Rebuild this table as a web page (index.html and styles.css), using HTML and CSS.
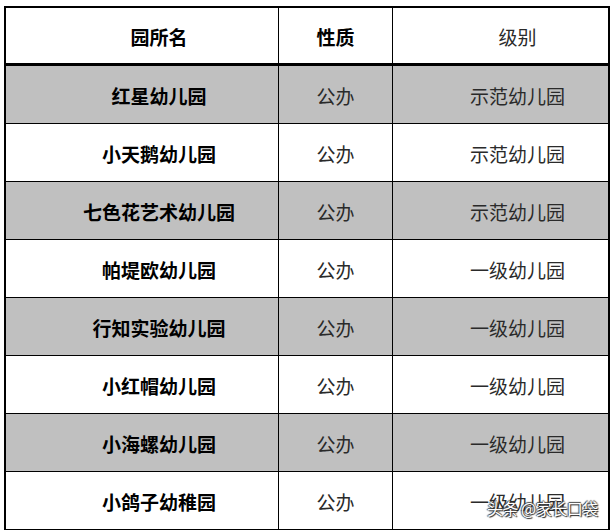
FILE: index.html
```html
<!DOCTYPE html>
<html lang="zh">
<head>
<meta charset="utf-8">
<link rel="stylesheet" href="styles.css">
</head>
<body>
<div class="page">
  <div class="table">
    <div class="row head">
      <div class="cell c1 b">园所名</div>
      <div class="cell c2 b">性质</div>
      <div class="cell c3">级别</div>
    </div>
    <div class="row gray first">
      <div class="cell c1 b">红星幼儿园</div>
      <div class="cell c2">公办</div>
      <div class="cell c3">示范幼儿园</div>
    </div>
    <div class="row">
      <div class="cell c1 b">小天鹅幼儿园</div>
      <div class="cell c2">公办</div>
      <div class="cell c3">示范幼儿园</div>
    </div>
    <div class="row gray">
      <div class="cell c1 b">七色花艺术幼儿园</div>
      <div class="cell c2">公办</div>
      <div class="cell c3">示范幼儿园</div>
    </div>
    <div class="row">
      <div class="cell c1 b">帕堤欧幼儿园</div>
      <div class="cell c2">公办</div>
      <div class="cell c3">一级幼儿园</div>
    </div>
    <div class="row gray">
      <div class="cell c1 b">行知实验幼儿园</div>
      <div class="cell c2">公办</div>
      <div class="cell c3">一级幼儿园</div>
    </div>
    <div class="row">
      <div class="cell c1 b">小红帽幼儿园</div>
      <div class="cell c2">公办</div>
      <div class="cell c3">一级幼儿园</div>
    </div>
    <div class="row gray">
      <div class="cell c1 b">小海螺幼儿园</div>
      <div class="cell c2">公办</div>
      <div class="cell c3">一级幼儿园</div>
    </div>
    <div class="row">
      <div class="cell c1 b">小鸽子幼稚园</div>
      <div class="cell c2">公办</div>
      <div class="cell c3">一级幼儿园</div>
    </div>
  </div>
  <div class="watermark">头条 @家长口袋</div>
</div>
</body>
</html>
```

FILE: styles.css
```css
html, body {
  margin: 0;
  padding: 0;
  background: #fff;
}
.page {
  position: relative;
  width: 615px;
  height: 530px;
  overflow: hidden;
  padding-top: 6px;
  padding-left: 4px;
  box-sizing: border-box;
  font-family: "Noto Sans CJK SC", "Noto Sans", sans-serif;
}
.table {
  width: 606px;
  border: 2px solid #000;
  box-sizing: border-box;
}
.row {
  display: grid;
  grid-template-columns: 272px 114px 1fr;
  height: 58px;
  border-top: 1px solid #000;
  box-sizing: border-box;
}
.row.head {
  border-top: none;
  height: 58px;
  border-bottom: 3px solid #000;
}
.row.first {
  border-top: none;
  height: 57px;
}
.row.gray {
  background: #c0c0c0;
}
.cell {
  display: flex;
  align-items: center;
  justify-content: center;
  font-size: 19px;
  color: #2a2a2a;
  padding-top: 2px;
  box-sizing: border-box;
}
.c2, .c3 {
  border-left: 1px solid #000;
}
.c1, .c3 {
  padding-left: 34px;
}
.b {
  font-weight: bold;
  color: #000;
}
.watermark {
  position: absolute;
  left: 487px;
  top: 496px;
  font-size: 16px;
  color: #fff;
  letter-spacing: -0.5px;
  text-shadow: 1px 1px 1px #222, -1px 0 1px #444, 0 -1px 1px #444;
}
```
